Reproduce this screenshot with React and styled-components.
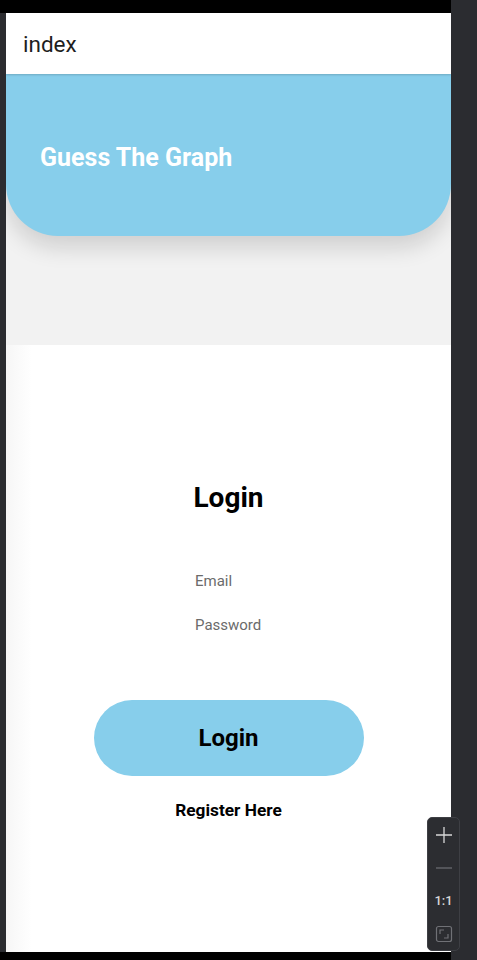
import React from "react";
import styled, { createGlobalStyle } from "styled-components";

const Global = createGlobalStyle`
    html, body {
        margin:0;
        padding:0;
        background:#2b2c30;
        font-family: Roboto, "Noto Sans", sans-serif;
    }
`;

const Stage = styled.div`
    width:477px;
    height:960px;
    position:relative;
    display:flex;
    flex-direction:column;
    background:#2b2c30;
    overflow:hidden;
`;

const TopBar = styled.div`
    height:13px;
    background:#000;
    margin-right:26px;
`;

const BottomBar = styled.div`
    height:8px;
    background:#000;
    margin-right:26px;
`;

const Phone = styled.div`
    flex:1;
    margin-left:6px;
    margin-right:26px;
    background:#fff;
    display:flex;
    flex-direction:column;
    overflow:hidden;
`;

const Header = styled.div`
    height:61px;
    display:flex;
    align-items:center;
    padding-left:17px;
    font-size:22.5px;
    color:#1e1e1e;
    background:#fff;
    position:relative;
    z-index:2;
    box-shadow:0 1px 2px rgba(0,0,0,0.18);
`;

const Top = styled.div`
    background:#f2f2f2;
    height:271px;
`;

const Banner = styled.div`
    height:162px;
    background:#87ceeb;
    border-radius:0 0 52px 52px;
    box-shadow:0 12px 22px rgba(0,0,0,0.14);
    display:flex;
    align-items:center;
    padding-left:34px;
    padding-top:4px;
    box-sizing:border-box;
`;

const BannerTitle = styled.h1`
    margin:0;
    color:#fff;
    font-size:25px;
    font-weight:700;
`;

const Body = styled.div`
    flex:1;
    display:flex;
    flex-direction:column;
    align-items:center;
    padding-top:137px;
    background:linear-gradient(to right,#f6f6f6 0px,#fff 26px);
`;

const Heading = styled.h2`
    margin:0;
    font-size:28px;
    font-weight:700;
    color:#000;
    line-height:32px;
`;

const Fields = styled.div`
    margin-top:57px;
    display:flex;
    flex-direction:column;
    gap:24px;
    width:67px;
`;

const Field = styled.input`
    border:none;
    outline:none;
    background:transparent;
    padding:0;
    font-family:Roboto, sans-serif;
    font-size:15px;
    line-height:20px;
    width:120px;
    color:#333;
    &::placeholder{
        color:#6b6b6b;
    }
`;

const Button = styled.button`
    margin-top:65px;
    width:270px;
    height:76px;
    border:none;
    border-radius:38px;
    background:#87ceeb;
    font-family:Roboto, sans-serif;
    font-size:24px;
    font-weight:700;
    color:#000;
`;

const Register = styled.div`
    margin-top:24px;
    font-size:17.3px;
    font-weight:700;
    color:#000;
`;

const Zoom = styled.div`
    position:absolute;
    left:427px;
    top:817px;
    width:33px;
    height:134px;
    background:#2c2d31;
    border:1px solid #3e3f44;
    border-radius:5px;
    display:flex;
    flex-direction:column;
    align-items:center;
    box-sizing:border-box;
    color:#d8d8d8;
`;

const ZoomSlot = styled.div`
    height:33px;
    display:flex;
    align-items:center;
    justify-content:center;
    font-size:13px;
    font-weight:500;
`;

const App = () =>
    <Stage>
        <Global/>
        <TopBar/>
        <Phone>
            <Header>index</Header>
            <Top>
                <Banner>
                    <BannerTitle>Guess The Graph</BannerTitle>
                </Banner>
            </Top>
            <Body>
                <Heading>Login</Heading>
                <Fields>
                    <Field placeholder="Email"/>
                    <Field placeholder="Password" type="password"/>
                </Fields>
                <Button>Login</Button>
                <Register>Register Here</Register>
            </Body>
        </Phone>
        <BottomBar/>
        <Zoom>
            <ZoomSlot>
                <svg width="18" height="18" viewBox="0 0 18 18">
                    <path d="M9 1v16M1 9h16" stroke="#d8d8d8" strokeWidth="1.3"/>
                </svg>
            </ZoomSlot>
            <ZoomSlot>
                <svg width="18" height="4" viewBox="0 0 18 4">
                    <path d="M1 2h16" stroke="#6a6b70" strokeWidth="1.3"/>
                </svg>
            </ZoomSlot>
            <ZoomSlot>1:1</ZoomSlot>
            <ZoomSlot>
                <svg width="18" height="18" viewBox="0 0 18 18" fill="none" stroke="#707176" strokeWidth="1.2">
                    <rect x="1.5" y="1.5" width="15" height="15" rx="2"/>
                    <path d="M5 9V5h4M13 9v4H9"/>
                </svg>
            </ZoomSlot>
        </Zoom>
    </Stage>

export default App;
